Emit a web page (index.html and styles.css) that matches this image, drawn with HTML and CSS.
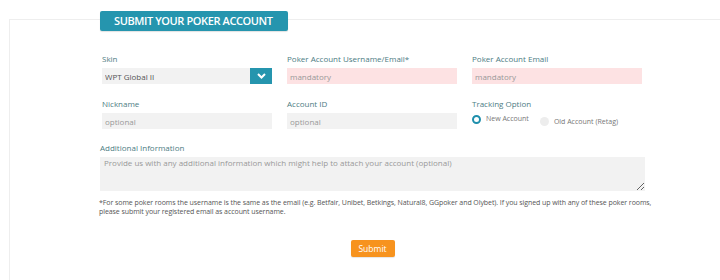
FILE: index.html
```html
<!DOCTYPE html>
<html lang="en">
<head>
  <meta charset="UTF-8">
  <title>Submit Your Poker Account</title>
  <link rel="stylesheet" href="styles.css">
</head>
<body>
  <div class="card">
    <div class="form-wrap">
      <h2 class="tab">Submit your poker account</h2>

      <form class="account-form" onsubmit="return false">
        <div class="grid">
          <div class="field">
            <label>Skin</label>
            <div class="select-box">
              <select name="skin">
                <option>WPT Global II</option>
              </select>
              <span class="arrow">
                <svg width="9" height="6" viewBox="0 0 9 6"><path d="M1 1l3.5 3.5L8 1" fill="none" stroke="#fff" stroke-width="2"/></svg>
              </span>
            </div>
          </div>
          <div class="field">
            <label>Poker Account Username/Email*</label>
            <input type="text" class="required" placeholder="mandatory">
          </div>
          <div class="field">
            <label>Poker Account Email</label>
            <input type="text" class="required" placeholder="mandatory">
          </div>

          <div class="field">
            <label>Nickname</label>
            <input type="text" placeholder="optional">
          </div>
          <div class="field">
            <label>Account ID</label>
            <input type="text" placeholder="optional">
          </div>
          <div class="field">
            <label>Tracking Option</label>
            <div class="radios">
              <span class="radio checked"><i></i>New Account</span>
              <span class="radio low"><i></i>Old Account (Retag)</span>
            </div>
          </div>
        </div>

        <div class="field wide">
          <label>Additional Information</label>
          <textarea placeholder="Provide us with any additional information which might help to attach your account (optional)"></textarea>
        </div>

        <p class="note">*For some poker rooms the username is the same as the email (e.g. Betfair, Unibet, Betkings, Natural8, GGpoker and Olybet). If you signed up with any of these poker rooms, please submit your registered email as account username.</p>

        <div class="actions">
          <button type="submit">Submit</button>
        </div>
      </form>
    </div>
  </div>
</body>
</html>
```

FILE: styles.css
```css
body {
  font-family: 'Open Sans', sans-serif;
  background: #fff;
  color: #666;
  margin: 0;
  overflow: hidden;
}

.card {
  margin: 19px 0 0 9px;
  border: 1px solid #eeeeee;
  border-right: none;
  border-bottom: none;
  height: 260px;
}

.form-wrap {
  width: 545px;
  margin-left: 90px;
}

.tab {
  display: block;
  width: max-content;
  margin: -9px 0 0 0;
  height: 20px;
  line-height: 20px;
  padding: 0 15px 0 14px;
  background: #2595ae;
  border-radius: 2px;
  color: #fff;
  font-size: 11px;
  font-weight: 600;
  letter-spacing: -0.4px;
  text-transform: uppercase;
  white-space: nowrap;
  box-shadow: 0 1px 1px rgba(0,0,0,0.12);
}

.grid {
  display: grid;
  grid-template-columns: 170px 170px 170px;
  column-gap: 15px;
  row-gap: 15px;
  margin: 23px 0 0 2px;
}

.field label {
  display: block;
  font-size: 8px;
  line-height: 10px;
  margin-bottom: 4px;
  color: #4d7c83;
}

.field input,
.field select {
  display: block;
  width: 100%;
  height: 16px;
  box-sizing: border-box;
  border: none;
  background: #f2f2f2;
  padding: 0 3px;
  font-family: 'Open Sans', sans-serif;
  font-size: 8px;
  color: #555;
  outline: none;
}

.field input::placeholder {
  color: #999;
}

.field input.required {
  background: #fde2e3;
}

.select-box {
  display: flex;
}

.select-box select {
  flex: 1;
  appearance: none;
  -webkit-appearance: none;
  color: #555;
}

.arrow {
  width: 22px;
  height: 16px;
  background: #2595ae;
  display: flex;
  align-items: center;
  justify-content: center;
}

.radios {
  display: flex;
  align-items: flex-start;
  gap: 11px;
  padding-top: 1px;
}

.radio {
  display: flex;
  align-items: center;
  gap: 5px;
  font-size: 7px;
  color: #777;
  line-height: 9px;
}

.radio i {
  width: 9px;
  height: 9px;
  border-radius: 50%;
  background: #ededed;
  box-sizing: border-box;
}

.radio.checked i {
  background: #fff;
  border: 2.5px solid #1f8fac;
  position: relative;
  top: 1px;
}

.radio.low {
  margin-top: 3px;
}

.wide {
  margin-top: 14px;
}

.wide textarea {
  display: block;
  width: 100%;
  height: 34px;
  box-sizing: border-box;
  border: none;
  background: #f2f2f2;
  padding: 1px 4px;
  font-family: 'Open Sans', sans-serif;
  font-size: 8px;
  line-height: 10px;
  color: #555;
  outline: none;
  resize: vertical;
}

.wide textarea::placeholder {
  color: #999;
}

.note {
  margin: 8px 0 0 -1px;
  font-size: 7px;
  line-height: 8.5px;
  letter-spacing: -0.07px;
  color: #555;
  width: 560px;
}

.actions {
  text-align: center;
  margin-top: 19px;
}

.actions button {
  width: 44px;
  height: 17px;
  border: none;
  border-radius: 2px;
  background: #f7931e;
  color: #fff;
  font-family: 'Open Sans', sans-serif;
  font-size: 8.5px;
  padding: 0;
  cursor: pointer;
  box-shadow: 0 1px 1px rgba(0,0,0,0.1);
}
```
